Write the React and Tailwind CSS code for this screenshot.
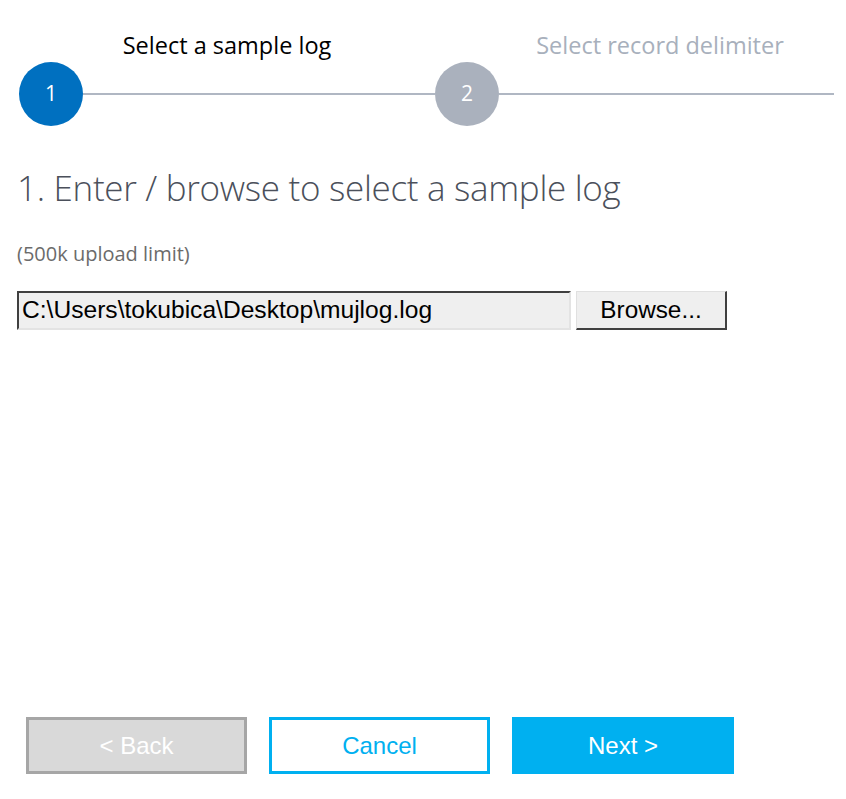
import React from "react";

const Step = ({ n, active }) => (
	<div
		className={`flex h-16 w-16 shrink-0 items-center justify-center rounded-full text-[21px] text-white ${
			active ? "bg-[#0070c0]" : "bg-[#aab1bd]"
		}`}
	>
		{n}
	</div>
);

export default function App() {
	return (
		<div className="relative h-[799px] w-[846px] overflow-hidden bg-white font-['Open_Sans',sans-serif]">
			{/* Stepper */}
			<div className="pt-[29px]">
				<div className="flex pl-[19px] text-[23.5px] leading-[32px]">
					<div className="w-[416px] shrink-0 text-center text-black">Select a sample log</div>
					<div className="w-[450px] shrink-0 text-center text-[#a8b0bc]">Select record delimiter</div>
				</div>
				<div className="mt-[1px] flex items-center pl-[19px] pr-[12px]">
					<Step n="1" active />
					<div className="h-[2px] w-[352px] shrink-0 bg-[#b0b7c3]" />
					<Step n="2" />
					<div className="h-[2px] flex-1 bg-[#b0b7c3]" />
				</div>
			</div>

			{/* Section */}
			<div className="px-[17px]">
				<h1 className="mt-[38px] text-[35px] font-light leading-[48px] tracking-[-0.3px] text-[#4b505b]">
					1. Enter / browse to select a sample log
				</h1>
				<p className="mt-[28px] text-[20px] leading-[28px] text-[#6b6b6b]">(500k upload limit)</p>

				<div className="mt-[23px] flex gap-[5px] font-['Liberation_Sans',Arial,sans-serif] text-black">
					<div className="flex h-[39px] w-[554px] items-center border-2 border-t-[#404040] border-l-[#404040] border-r-[#e3e3e3] border-b-[#e3e3e3] bg-[#efefef] px-[3px] text-[24.6px]">
						C:\Users\tokubica\Desktop\mujlog.log
					</div>
					<button className="flex h-[39px] w-[151px] items-center justify-center border border-b-2 border-r-2 border-t-[#e0e0e0] border-l-[#e0e0e0] border-r-[#404040] border-b-[#404040] bg-[#efefef] text-[24.3px]">
						Browse...
					</button>
				</div>
			</div>

			{/* Footer buttons */}
			<div className="absolute left-[26px] top-[717px] flex gap-[22px] font-['Liberation_Sans',Arial,sans-serif] text-[24px]">
				<button className="flex h-[57px] w-[221px] items-center justify-center border-[3px] border-[#a6a6a6] bg-[#d9d9d9] text-white">
					&lt; Back
				</button>
				<button className="flex h-[57px] w-[221px] items-center justify-center border-[3px] border-[#00b0f0] bg-white text-[#00b0f0]">
					Cancel
				</button>
				<button className="flex h-[57px] w-[222px] items-center justify-center bg-[#00b0f0] text-white">
					Next &gt;
				</button>
			</div>
		</div>
	);
}
